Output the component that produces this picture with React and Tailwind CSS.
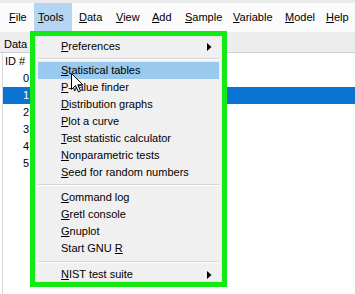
import React from "react";

const U = ({ children }) => <span className="underline underline-offset-[1px]">{children}</span>;

function Arrow() {
  return (
    <svg width="5" height="8" viewBox="0 0 5 8" className="block">
      <path d="M0 0 L4.5 4 L0 8 Z" fill="#000" />
    </svg>
  );
}

function Row({ children, hi, arrow }) {
  return (
    <div className={`h-[17px] mx-[2px] flex items-center justify-between pl-[23px] pr-[7px] ${hi ? "bg-[#99c9ef]" : ""}`}>
      <span className="leading-none">{children}</span>
      {arrow ? <Arrow /> : null}
    </div>
  );
}

function Sep({ h }) {
  return (
    <div className={`${h} mx-[2px] flex flex-col justify-center`}>
      <div className="h-px bg-[#d7d7d7]" />
      <div className="h-px bg-[#ffffff]" />
    </div>
  );
}

export default function App() {
  const menus = [
    ["F", "ile", "w-[30px] pl-[5px]"],
    ["T", "ools", "w-[38px] pl-[4px] bg-[#b5d6f3]"],
    ["D", "ata", "w-[37px] pl-[7px]"],
    ["V", "iew", "w-[36px] pl-[7px]"],
    ["A", "dd", "w-[33px] pl-[7px]"],
    ["S", "ample", "w-[48px] pl-[7px]"],
    ["V", "ariable", "w-[52px] pl-[7px]"],
    ["M", "odel", "w-[41px] pl-[7px]"],
    ["H", "elp", "w-[36px] pl-[7px]"],
  ];
  const ids = ["0", "1", "2", "3", "4", "5"];
  return (
    <div
      className="relative w-[355px] h-[294px] overflow-hidden bg-white text-black text-[11px]"
      style={{ fontFamily: '"Liberation Sans", Arial, sans-serif' }}
    >
      <div className="h-[3px] bg-[#ececec]" />
      <div className="h-[29px] bg-[#fbfbfb] flex pl-[4px]">
        {menus.map(([a, b, c], i) => (
          <div key={i} className={`h-full flex items-center shrink-0 ${c}`}>
            <span>
              <U>{a}</U>
              {b}
            </span>
          </div>
        ))}
      </div>
      <div className="h-[21px] bg-[#ededed] border-b border-[#cdcdcd] flex items-center pl-[4px] pt-[4px]">
        Data file
      </div>
      <div className="ml-[2px] border-l border-[#d9d9d9] h-[241px]">
        <div className="h-[17px] flex items-center pl-[2px]">ID #</div>
        {ids.map((n) => (
          <div
            key={n}
            className={`h-[17px] flex items-center ${n === "1" ? "bg-[#0a74d2] text-white" : ""}`}
          >
            <span className="w-[26px] text-right">{n}</span>
          </div>
        ))}
      </div>

      <div className="absolute left-[30px] top-[31px] w-[197px] h-[256px] border-[5px] border-[#14e914] bg-[#f0f0f0]">
        <div className="h-full border border-[#e4e6ee] pt-[1px]">
          <Row arrow>
            <U>P</U>references
          </Row>
          <Sep h="h-[7px]" />
          <Row hi>
            <U>S</U>tatistical tables
          </Row>
          <Row>
            <U>P</U>-value finder
          </Row>
          <Row>
            <U>D</U>istribution graphs
          </Row>
          <Row>
            <U>P</U>lot a curve
          </Row>
          <Row>
            <U>T</U>est statistic calculator
          </Row>
          <Row>
            <U>N</U>onparametric tests
          </Row>
          <Row>
            <U>S</U>eed for random numbers
          </Row>
          <Sep h="h-[8px]" />
          <Row>
            <U>C</U>ommand log
          </Row>
          <Row>
            <U>G</U>retl console
          </Row>
          <Row>
            <U>G</U>nuplot
          </Row>
          <Row>
            Start GNU <U>R</U>
          </Row>
          <Sep h="h-[9px]" />
          <Row arrow>
            <U>N</U>IST test suite
          </Row>
        </div>
      </div>

      <svg
        className="absolute left-[71px] top-[73px]"
        width="13"
        height="20"
        viewBox="0 0 13 20"
      >
        <path
          d="M0.5 0.5 L0.5 16.5 L4.5 12.5 L7.5 19 L9.5 18 L6.8 11.8 L11.8 11.8 Z"
          fill="#fff"
          stroke="#000"
          strokeWidth="1"
          strokeLinejoin="miter"
        />
      </svg>
    </div>
  );
}
